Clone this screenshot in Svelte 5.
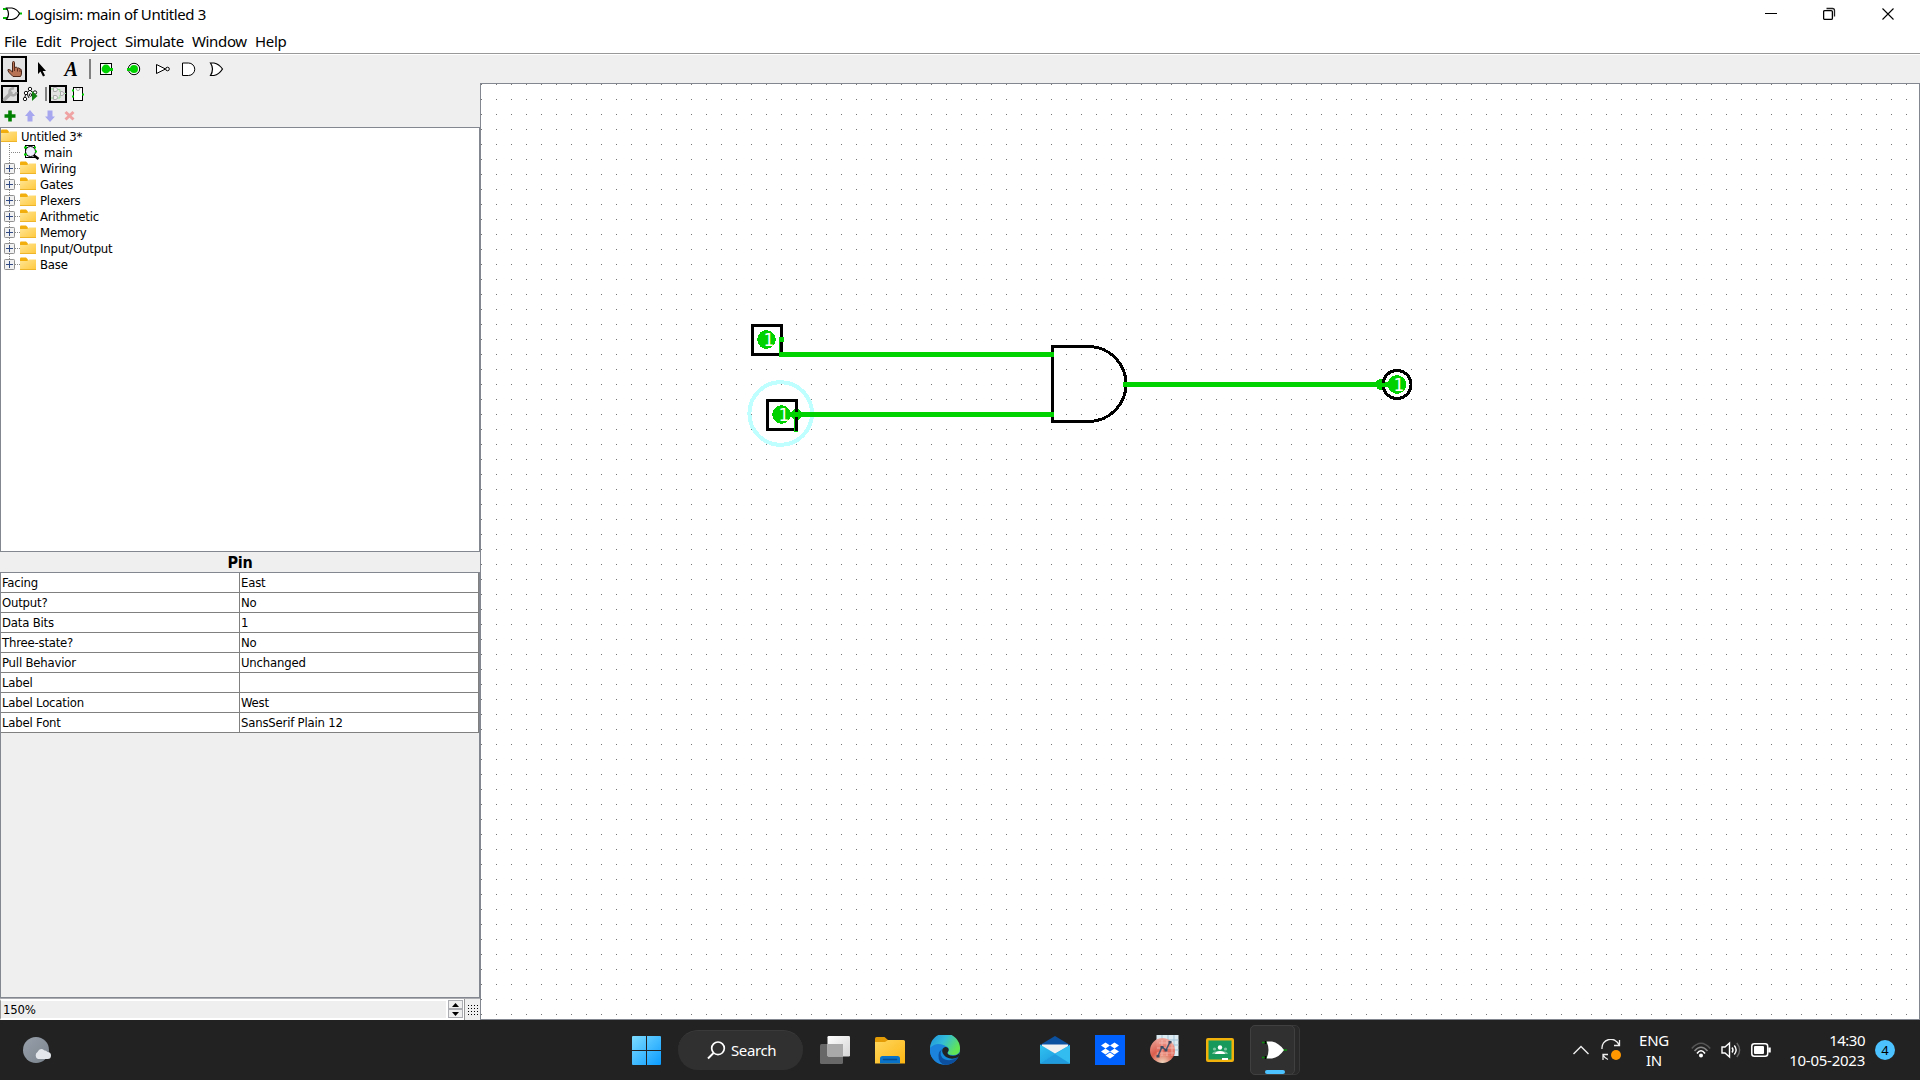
<script>
  const menus = [
    ['File', 31.5], ['Edit', 34.5], ['Project', 55], ['Simulate', 67], ['Window', 63], ['Help', 40]
  ];
  const libraries = ['Wiring', 'Gates', 'Plexers', 'Arithmetic', 'Memory', 'Input/Output', 'Base'];
  const attributes = [
    ['Facing', 'East'], ['Output?', 'No'], ['Data Bits', '1'], ['Three-state?', 'No'],
    ['Pull Behavior', 'Unchanged'], ['Label', ''], ['Label Location', 'West'], ['Label Font', 'SansSerif Plain 12']
  ];
</script>

{#snippet folder()}
  <svg class="folder" width="16" height="14" viewBox="0 0 16 14">
    <path d="M0 3V1.5Q0 .5 1 .5H6L8 2.5V4H0z" fill="#f2ae0c" />
    <path d="M0 4H7L9 2.5H16V13H0z" fill="url(#folderFill)" />
    <path d="M0 12.5H16" stroke="#efb52a" />
  </svg>
{/snippet}

<div class="screen">
  <header class="titlebar">
    <svg class="app-icon" width="20" height="16" viewBox="0 0 20 16">
      <path d="M0 2H5M0 11H5M16 6.500H19" stroke="#0b0" stroke-width="2" />
      <path d="M3.500 1H9Q14 2 16.500 6.500Q14 12 9 12.500H3.500Q7.500 7 3.500 1z" fill="#fff" stroke="#000" stroke-width="1.2" />
    </svg>
    <span class="title">Logisim: main of Untitled 3</span>
    <div class="controls">
      <svg width="12" height="14" viewBox="0 0 12 14"><path d="M0 6.500H12" stroke="#000" /></svg>
      <svg width="13" height="14" viewBox="0 0 13 14"><path d="M3.500 1.500H9.500Q11.500 1.500 11.500 3.500V9.500" fill="none" stroke="#222" stroke-width="1.300" /><rect x=".6" y="3.600" width="8.800" height="8.800" rx="1.200" fill="none" stroke="#000" stroke-width="1.300" /></svg>
      <svg width="12" height="14" viewBox="0 0 12 14"><path d="M.5 1.500L11.500 12.500M11.500 1.500L.5 12.500" stroke="#000" stroke-width="1.100" /></svg>
    </div>
  </header>
  <nav class="menubar">
    {#each menus as [name, width]}
      <span style="width: {width}px">{name}</span>
    {/each}
  </nav>

  <div class="toolbar">
    <svg width="240" height="28" viewBox="0 55 240 28">
      <rect x="2" y="57" width="24" height="24" fill="#e2e2e2" stroke="#000" stroke-width="2" />
      <path d="M12.500 71V62.500Q12.500 61.500 13.500 61.500T14.500 62.500V67.500Q16.500 66.500 17.500 68Q19.500 67.500 20 69Q21.500 69 21.500 70.500V73Q21.500 75 20.500 76.500H13Q11 74.500 9 72.500Q7.500 70.500 8 69.500Q10 69 12.500 72z" fill="#b87354" stroke="#4a2518" />
      <path d="M14.500 67V71M17.500 68.500V71.500M20 69.500V72" stroke="#5c2c1c" />
      <path d="M38 62V74L40.500 71.500L43 76.500L45 75.500L42.700 71H46z" fill="#000" />
      <text x="64.500" y="75.800" class="tool-a">A</text>
      <path d="M90 59V79" stroke="#808080" stroke-width="2" />
      <rect x="100.500" y="63.500" width="11" height="11" fill="#fff" stroke="#000" />
      <circle cx="106" cy="69" r="4.400" fill="#00d200" /><rect x="110" y="68" width="3" height="3" fill="#00d200" />
      <circle cx="134" cy="69" r="5.700" fill="#fff" stroke="#000" />
      <circle cx="134" cy="69" r="4" fill="#00d200" /><rect x="127" y="68" width="4" height="3" fill="#00d200" />
      <path d="M156.500 64.500V73.500L165.500 69z" fill="#fff" stroke="#000" /><circle cx="167.500" cy="69" r="1.800" fill="#fff" stroke="#000" />
      <path d="M182.500 63H188.500A6 6 0 0 1 188.500 75.500H182.500z" fill="#fff" stroke="#000" />
      <path d="M210.500 63H214Q219 64 222.500 69Q219 74.500 214 75.500H210.500Q214.500 69 210.500 63z" fill="#fff" stroke="#000" stroke-width="1.200" />
    </svg>
  </div>

  <main class="workspace">
    <aside class="sidebar">
      <div class="side-tools">
        <svg width="100" height="44" viewBox="0 83 100 44">
          <rect x="2" y="86" width="16" height="16" fill="#e0e0e0" stroke="#000" stroke-width="2" />
          <path d="M4.500 99.500L11 93" stroke="#aaa" stroke-width="3.400" stroke-linecap="round" />
          <path d="M14 88.500A3.500 3.500 0 1 0 16.500 92" fill="none" stroke="#aaa" stroke-width="2.600" />
          <g fill="#fff" stroke="#111">
            <path d="M30 90L26 93.500L24.500 98M30 90L34 94M27 94L29 98" fill="none" />
            <circle cx="30" cy="89" r="1.700" /><circle cx="26" cy="93" r="1.700" /><circle cx="35" cy="92.500" r="1.700" /><circle cx="25" cy="99" r="1.700" /><circle cx="30.500" cy="95" r="1.300" />
          </g>
          <path d="M32 91V101L37.500 96z" fill="#118211" />
          <path d="M46 87V101" stroke="#808080" stroke-width="2" />
          <rect x="50" y="86" width="16" height="16" fill="#e2e2e2" stroke="#000" stroke-width="2" />
          <path d="M51 89H53M51 98H53M57 89.500H60V92M57 98H60V95M64 93.500H66" fill="none" stroke="#91d891" />
          <g fill="#eee" stroke="#aaa"><path d="M53.500 87.500H56Q57.500 88 57.500 89.500T56 91.500H53.500zM53.500 95.500H56Q57.500 96 57.500 97.500T56 99.500H53.500zM60.500 91.500H62Q64 92 64 93.500T62 95.500H60.500z" /></g>
          <rect x="73.500" y="87.500" width="9" height="13" fill="#fff" stroke="#000" />
          <path d="M76 88Q76 90.500 78 90.500T80 88" fill="none" stroke="#aaa" />
          <path d="M72 90.500H74M72 96.500H74M82 94.500H84" stroke="#00d200" stroke-width="2" />
          <path d="M10 110.500V121.500M4.500 116H15.500" stroke="#008000" stroke-width="3.600" />
          <path d="M30 110L35 116H32.500V121.500H27.500V116H25z" fill="#a7a7ef" />
          <path d="M50 122L55 116.500H52.500V110.500H47.500V116.500H45z" fill="#a7a7ef" />
          <path d="M65.500 112L73.500 119.500M73.500 112L65.500 119.500" stroke="#f0a3a3" stroke-width="3" />
        </svg>
      </div>

      <div class="tree">
        <svg class="defs" width="0" height="0">
          <defs><linearGradient id="folderFill" x1="0" y1="0" x2="1" y2="1"><stop offset="0" stop-color="#ffe696" /><stop offset="1" stop-color="#ffc83c" /></linearGradient></defs>
        </svg>
        <div class="node root">{@render folder()}<span>Untitled 3*</span></div>
        <div class="node child">
          <svg width="39" height="16" viewBox="0 0 39 16">
            <path d="M8.500 0V16M10 8.500H20" stroke="#888" stroke-dasharray="1 1" />
            <rect x="24.500" y="1.500" width="9" height="12" fill="#f4f4ff" stroke="#000" />
            <circle cx="29.500" cy="7.500" r="5" fill="#f0f0ff" stroke="#000" /><path d="M33 11.500L37.500 15" stroke="#000" stroke-width="2.500" />
            <path d="M23 3.500H26M23 10.500H26M34 7.500H36M33 3.500H35" stroke="#00d200" stroke-width="2" />
          </svg><span>main</span>
        </div>
        {#each libraries as name, i}
          <div class="node">
            <svg width="19" height="16" viewBox="0 0 19 16">
              <path d={i < 6 ? 'M8.5 0V16M14 8.5H19' : 'M8.5 0V8M14 8.5H19'} stroke="#888" stroke-dasharray="1 1" />
              <rect x="3.500" y="3.500" width="10" height="10" rx=".8" fill="#f1f1f1" stroke="#919191" />
              <path d="M5 8.500H12M8.500 5V12" stroke="#304a86" />
            </svg>
            {@render folder()}<span>{name}</span>
          </div>
        {/each}
      </div>

      <div class="attr-title">Pin</div>
      <div class="attrs">
        {#each attributes as [key, value]}
          <div class="row"><span>{key}</span><span>{value}</span></div>
        {/each}
      </div>
      <div class="zoombar">
        <div class="zoom-value">150%</div>
        <div class="spinner">
          <div class="spin"><svg width="7" height="4" viewBox="0 0 7 4"><path d="M3.500 0L7 4H0z" /></svg></div>
          <div class="spin"><svg width="7" height="4" viewBox="0 0 7 4"><path d="M0 0H7L3.500 4z" /></svg></div>
        </div>
        <div class="grid-toggle"></div>
      </div>
    </aside>

    <section class="canvas">
      <svg width="1438" height="935" viewBox="481 84 1438 935">
        <defs><pattern id="dots" x="481" y="84" width="15" height="15" patternUnits="userSpaceOnUse"><rect width="1" height="1" fill="#777" /></pattern></defs>
        <rect x="481" y="84" width="1438" height="935" fill="url(#dots)" shape-rendering="crispEdges" />
        <g shape-rendering="crispEdges">
          <circle cx="780.700" cy="413.500" r="31.300" fill="none" stroke="#c0ffff" stroke-width="4" />
          <path d="M1088.500 346.500H1052.500V421.500H1088.500A37.500 37.500 0 0 0 1088.500 346.500z" fill="none" stroke="#000" stroke-width="3" />
          <rect x="752.500" y="325.500" width="29" height="29" fill="none" stroke="#000" stroke-width="3" />
          <circle cx="766.500" cy="339.500" r="9.300" fill="#00d200" />
          <path d="M779.500 342V357" stroke="#00d200" />
          <circle cx="781.500" cy="339.500" r="2.800" fill="#00d200" />
          <path d="M779 354.500H1054M790 414.500H1054M1123 384.500H1390" stroke="#00d200" stroke-width="5" />
          <circle cx="796.500" cy="414.500" r="5.500" fill="#00d200" />
          <path d="M796 418V432" stroke="#00d200" stroke-width="4" />
          <path d="M796.500 411.500V400.500H767.500V429.500H795M796.500 417V431" fill="none" stroke="#000" stroke-width="3" />
          <path d="M794.500 420V432" stroke="#00d200" stroke-width="1" />
          <circle cx="781.500" cy="414.500" r="9.300" fill="#00d200" />
          <path d="M789 414.500H800" stroke="#00d200" stroke-width="5" />
          <circle cx="1381" cy="384.500" r="5.500" fill="#00d200" />
          <circle cx="1397" cy="384.500" r="14" fill="none" stroke="#000" stroke-width="3" />
          <circle cx="1397" cy="384.500" r="9.300" fill="#00d200" />
          <path d="M1380 384.500H1392" stroke="#00d200" stroke-width="4" />
        </g>
        <g class="bit"><text x="763.500" y="346">1</text><text x="778.500" y="421">1</text><text x="1393.500" y="391">1</text></g>
      </svg>
    </section>
  </main>

  <footer class="taskbar">
    <svg class="weather" width="32" height="30" viewBox="20 1034 32 30">
      <defs>
        <linearGradient id="moon" x1="0" y1="0" x2="1" y2="1"><stop offset="0" stop-color="#98a1ab" /><stop offset="1" stop-color="#7b838d" /></linearGradient>
        <linearGradient id="win" x1="0" y1="0" x2="1" y2="1"><stop offset="0" stop-color="#7ddcff" /><stop offset="1" stop-color="#0a9bff" /></linearGradient>
        <linearGradient id="gold" x1="0" y1="0" x2="1" y2="1"><stop offset="0" stop-color="#ffd75e" /><stop offset="1" stop-color="#fcb512" /></linearGradient>
        <linearGradient id="edgeTop" x1="0" y1="0" x2="1" y2=".5"><stop offset="0" stop-color="#1c8ede" /><stop offset=".5" stop-color="#33bcd8" /><stop offset="1" stop-color="#62e554" /></linearGradient>
        <linearGradient id="mailFill" x1="0" y1="0" x2="1" y2="1"><stop offset="0" stop-color="#32c3f0" /><stop offset="1" stop-color="#1690dc" /></linearGradient>
        <linearGradient id="view" x1="0" y1="0" x2="1" y2="1"><stop offset="0" stop-color="#fff" /><stop offset="1" stop-color="#d4d4d4" /></linearGradient>
        <radialGradient id="ball" cx=".5" cy="1" r="1"><stop offset="0" stop-color="#fbe3c8" /><stop offset=".5" stop-color="#e4604f" /><stop offset="1" stop-color="#f3a69a" /></radialGradient>
      </defs>
      <circle cx="36" cy="1050" r="13" fill="url(#moon)" />
      <path d="M38 1059A4 4 0 0 1 37.500 1052Q40 1047 44.500 1050.500Q46 1050 47.500 1052Q51 1052 51 1055.500T47.500 1059z" fill="#e3e7eb" />
    </svg>
    <div class="apps">
      <svg width="29" height="29" viewBox="0 0 29 29"><path d="M1 0H14V14H0V1Q0 0 1 0zM15 0H28Q29 0 29 1V14H15zM0 15H14V29H1Q0 29 0 28zM15 15H29V28Q29 29 28 29H15z" fill="url(#win)" /></svg>
      <div class="search">
        <svg width="19" height="19" viewBox="0 0 19 19"><circle cx="11" cy="7.300" r="6.300" fill="none" stroke="#fff" stroke-width="1.700" /><path d="M6.500 12L1 17.500" stroke="#fff" stroke-width="2" /></svg>
        <span>Search</span>
      </div>
      <svg width="30" height="30" viewBox="0 0 30 30"><rect x="0" y="9" width="23" height="20" rx="1.500" fill="#686868" /><rect x="7.500" y="1" width="22.500" height="20.500" rx="1.200" fill="url(#view)" /><path d="M7.500 9H23V21.500H8.500Q7.500 21.500 7.500 20.500z" fill="#a9a9a9" /></svg>
      <svg width="30" height="30" viewBox="0 0 30 30"><path d="M0 3.500Q0 2 1.500 2H9.500L13 5V10H0z" fill="#e39b06" /><path d="M0 7H10L13 5H28.500Q30 5 30 6.500V28.500H0z" fill="url(#gold)" /><path d="M5 28.500V23.500Q5 21 7.500 21H22.500Q25 21 25 23.500V28.500z" fill="#0873c8" /><path d="M8.500 24.500H21.500" stroke="#064c91" stroke-width="1.500" stroke-linecap="round" /></svg>
      <svg width="30" height="30" viewBox="0 0 30 30">
        <circle cx="15" cy="15" r="15" fill="#1489da" />
        <path d="M0 13A15 15 0 0 1 30 14Q30 20 23 20Q17 20 18 17Q20 14 17.500 12Q10 7 0 13z" fill="url(#edgeTop)" />
        <path d="M16 11.500Q8 13 10 21Q12 27 19 27.500Q12 31 5.500 26.500Q-1 21 0 13Q7 6 16 11.500z" fill="#1b83dc" />
        <path d="M12 14Q8 21 15 24.500Q21 27 28.500 22Q24 30 15 30Q8 28 8.500 20Q9 16 12 14z" fill="#0d4f9f" />
        <path d="M12.500 14Q15 10.500 18 13Q19.500 15 17.500 17.500Q17 20.500 23 20.700Q28 20.500 30 17L28.500 22Q22 25.500 16 22Q11 18 12.500 14z" fill="#222" />
      </svg>
      <svg class="mail" width="30" height="30" viewBox="0 0 30 30"><path d="M0 10L15 1L30 10V16H0z" fill="#0c50a0" /><path d="M2 9.500H28V17L15 24L2 17z" fill="#f1f1f1" /><path d="M0 9.500L15 18.500L30 10V28.500H0z" fill="url(#mailFill)" /><path d="M30 10L0 28.500H30z" fill="#32bcf0" /><path d="M15 19L30 28.500H0z" fill="#209bde" /></svg>
      <svg width="30" height="30" viewBox="0 0 30 30"><rect width="30" height="30" fill="#0061fe" /><path d="M10.500 7.500L15 10.500L10.500 13.500L6 10.500zM19.500 7.500L24 10.500L19.500 13.500L15 10.500zM10.500 13.500L15 16.500L10.500 19.500L6 16.500zM19.500 13.500L24 16.500L19.500 19.500L15 16.500zM15 17.500L19.500 20.500L15 23.500L10.500 20.500z" fill="#fff" /></svg>
      <svg width="30" height="30" viewBox="0 0 30 30"><rect x="6.500" width="22" height="21" fill="#dceaf2" /><path d="M6.500 5H28.500M6.500 10H28.500M6.500 15H28.500M12 0V21M18 0V21M24 0V21" stroke="#a3c3d7" /><circle cx="12.500" cy="15.500" r="12.500" fill="url(#ball)" opacity=".95" /><path d="M9 8H24M7 13H25M7 18H24M12 5V21M17 5V21M22 8V21" stroke="#f8d1ca" opacity=".6" /><path d="M8 21L12 12L16 15L20 7" fill="none" stroke="#45556c" stroke-width="1.500" /><path d="M6.500 20H9.500V22.500H6.500zM10.500 11H13.500V13.500H10.500zM14.500 14H17.500V16.500H14.500zM18.500 6H21.500V8.500H18.500z" fill="#3b4a60" /></svg>
      <svg width="30" height="30" viewBox="0 0 30 30"><rect x="1" y="3" width="28" height="24" rx="2" fill="#f1b20c" /><rect x="3.500" y="5.500" width="23" height="19" fill="#17995c" /><g fill="#7cc69f"><circle cx="9.500" cy="14" r="1.600" /><circle cx="20.500" cy="14" r="1.600" /><path d="M7 19Q7.500 16.500 10 16.500H20Q22.500 16.500 23 19z" /></g><circle cx="15" cy="12.500" r="2.200" fill="#fff" /><path d="M10 19Q10.500 16 15 16T20 19z" fill="#fff" /><path d="M17 24H23" stroke="#fff" stroke-width="2" /></svg>
      <svg class="running" width="50" height="50" viewBox="0 0 50 50">
        <rect x=".5" y=".5" width="49" height="49" rx="4.500" fill="#292929" stroke="#383838" /><rect x=".5" y=".5" width="44" height="49" rx="4.500" fill="#303030" stroke="#404040" />
        <path d="M12 17.500H17M12 32.500H17M33 25H37" stroke="#0a8a0a" stroke-width="1.600" />
        <path d="M16.500 16.500H22Q29 18 34 25Q29 32.500 22 33.500H16.500Q20.500 25 16.500 16.500z" fill="#fff" />
        <path d="M15.500 16V19M15.500 31V34" stroke="#000" stroke-width="1.500" />
        <rect x="15" y="45" width="20" height="4" rx="2" fill="#4cc2ff" />
      </svg>
    </div>
    <div class="tray">
      <svg width="16" height="10" viewBox="0 0 16 10"><path d="M.5 9L8 1.500L15.500 9" fill="none" stroke="#eee" stroke-width="1.400" /></svg>
      <svg class="sync" width="20" height="22" viewBox="0 0 20 22"><path d="M1 10A8.800 8.800 0 0 1 18 6M18.500 1V6.500H13M7 20.500Q4 19.500 2 16M2 21V15.500H7" fill="none" stroke="#eee" stroke-width="1.300" /><circle cx="15" cy="16" r="5" fill="#ff9800" /></svg>
      <div class="lang"><span>ENG</span><span>IN</span></div>
      <svg class="wifi" width="20" height="16" viewBox="0 0 20 16"><g fill="none" stroke-width="1.600"><path d="M.8 6.500Q10-4 19.200 6.500" stroke="#555" /><path d="M3.500 9Q10 1.500 16.500 9" stroke="#888" /><path d="M6 11.500Q10 6 14 11.500" stroke="#fff" /></g><circle cx="10" cy="13.500" r="2" fill="#fff" /></svg>
      <svg class="volume" width="20" height="18" viewBox="0 0 20 18"><g fill="none" stroke="#fff" stroke-width="1.400"><path d="M1 6H4L8.500 2V16L4 12H1z" /><path d="M11 6.500Q13 9 11 11.500M13.300 4.500Q17 9 13.300 13.500" /><path d="M15.800 2Q21.500 9 15.800 16" stroke="#666" /></g></svg>
      <svg class="battery" width="20" height="14" viewBox="0 0 20 14"><rect x=".8" y=".8" width="15.900" height="12.400" rx="2.500" fill="none" stroke="#fff" stroke-width="1.500" /><rect x="3" y="3" width="10" height="8" rx="1" fill="#fff" /><path d="M18.500 4.500V9.500" stroke="#fff" stroke-width="2.500" /></svg>
      <div class="clock"><span class="time">14:30</span><span>10-05-2023</span></div>
      <div class="badge">4</div>
    </div>
  </footer>
</div>

<style>
  :global(body) { background: #fff; }
  .screen { width: 1920px; height: 1080px; display: flex; flex-direction: column; overflow: hidden; background: #fff; color: #000; font-family: "Noto Sans", sans-serif; }
  svg { display: block; flex: none; }
  .titlebar { height: 28px; display: flex; align-items: center; padding-left: 3px; font-size: 15px; box-sizing: border-box; }
  .title { margin-left: 4px; line-height: 28px; letter-spacing: -.4px; white-space: nowrap; }
  .app-icon { margin-top: 2px; }
  .controls { margin-left: auto; margin-right: 26px; display: flex; gap: 46px; align-items: center; }
  .menubar { height: 25px; display: flex; padding-left: 4px; font-size: 15px; letter-spacing: -.35px; line-height: 27px; border-bottom: 1px solid #999; box-sizing: content-box; }
  .toolbar { height: 28px; border-top: 1px solid #fff; background: #efefef; }
  .workspace { height: 937px; display: flex; background: #efefef; }
  .sidebar { width: 480px; display: flex; flex-direction: column; font: 13px "DejaVu Sans Condensed", "DejaVu Sans", sans-serif; letter-spacing: -.2px; }
  .side-tools { height: 44px; }
  .tree { height: 424px; box-sizing: border-box; border: solid #828790; border-width: 1px 1px 0; background: #fff; }
  .defs { height: 0; }
  .node { height: 16px; display: flex; align-items: center; }
  .node span { margin-left: 4px; line-height: 16px; padding-top: 1px; }
  .child span { margin-left: 4px; }
  .attr-title { height: 20px; border-top: 1px solid #828790; text-align: center; font: bold 16px/22px "DejaVu Sans Condensed", sans-serif; letter-spacing: -.2px; }
  .attrs { height: 426px; border: 1px solid #828790; box-sizing: border-box; }
  .row { height: 20px; width: 478px; box-sizing: border-box; display: grid; grid-template-columns: 239px 239px; border-bottom: 1px solid #808080; background: #fff; }
  .row span { padding-left: 1px; border-right: 1px solid #808080; line-height: 20px; height: 19px; white-space: nowrap; }
  .row span + span { padding-left: 1px; }
  .zoombar { height: 22px; box-sizing: border-box; display: flex; border-top: 1px solid #abadb3; }
  .zoom-value { width: 448px; height: 21px; box-sizing: border-box; border: 2px solid #fff; border-left: 1px solid #999; padding-left: 2px; line-height: 18px; }
  .spinner { width: 17px; box-sizing: border-box; border-right: 1px solid #999; background: #fff; padding-top: 1px; }
  .spin { width: 15px; height: 9px; border: 1px solid #abadb3; box-sizing: border-box; background: #efefef; display: grid; place-items: center; }
  .grid-toggle { width: 11px; height: 11px; margin: 5px 2px; background: radial-gradient(circle, #000 .7px, transparent .8px) 0 0 / 3px 3px; }
  .canvas { width: 1440px; height: 937px; box-sizing: border-box; border: 1px solid #828790; background: #fff; }
  .tool-a { font: italic bold 20px "Liberation Serif", serif; }
  .bit { font: 17px "DejaVu Sans", sans-serif; fill: #fff; }
  .taskbar { height: 60px; background: #222; color: #fff; display: flex; align-items: center; }
  .weather { margin-left: 20px; margin-bottom: 2px; }
  .apps { margin-left: 580px; width: 668px; display: flex; align-items: center; gap: 25px; }
  .search { width: 125px; height: 40px; margin: 0 -8px; border-radius: 20px; background: #303030; display: flex; align-items: center; box-sizing: border-box; padding-left: 29px; gap: 5px; font-size: 15px; letter-spacing: -.4px; border-top: 1px solid #3a3a3a; }
  .search span { padding-bottom: 2px; }
  .mail { margin-left: 55px; }
  .running { margin-left: -10px; }
  .tray { margin-left: 273px; display: flex; align-items: center; font-size: 15px; }
  .sync { margin-left: 12px; }
  .lang, .clock { display: flex; flex-direction: column; line-height: 20px; padding-bottom: 1px; }
  .lang { width: 40px; margin-left: 13px; text-align: center; letter-spacing: -.3px; }
  .wifi { margin-left: 17px; }
  .volume { margin-left: 10px; }
  .battery { margin-left: 10px; }
  .clock { width: 94px; text-align: right; letter-spacing: -.25px; }
  .time { letter-spacing: -.5px; }
  .badge { width: 20px; height: 20px; margin-left: 10px; border-radius: 50%; background: #4cc2ff; color: #000; text-align: center; font-size: 13px; line-height: 20px; }
</style>
